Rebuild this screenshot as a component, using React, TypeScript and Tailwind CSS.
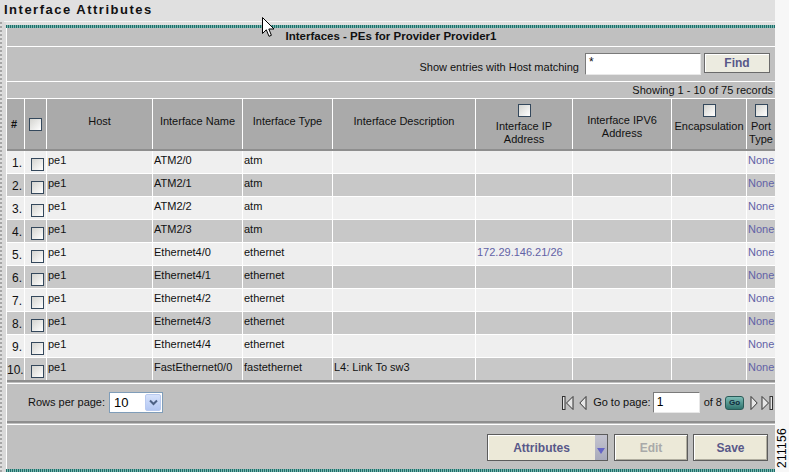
import React from "react";

const rows: [string, string, string, string][] = [
  ["ATM2/0", "atm", "", ""],
  ["ATM2/1", "atm", "", ""],
  ["ATM2/2", "atm", "", ""],
  ["ATM2/3", "atm", "", ""],
  ["Ethernet4/0", "ethernet", "", "172.29.146.21/26"],
  ["Ethernet4/1", "ethernet", "", ""],
  ["Ethernet4/2", "ethernet", "", ""],
  ["Ethernet4/3", "ethernet", "", ""],
  ["Ethernet4/4", "ethernet", "", ""],
  ["FastEthernet0/0", "fastethernet", "L4: Link To sw3", ""],
];

const cols = "grid grid-cols-[18px_22px_106px_90px_90px_143px_97px_99px_75px_28px]";

function Box({ cls = "" }: { cls?: string }) {
  return (
    <div
      className={`w-[13px] h-[13px] border border-[#34485c] bg-linear-to-br from-[#d4d4d0] to-white ${cls}`}
    />
  );
}

function Btn({
  children,
  w,
  disabled,
}: {
  children: React.ReactNode;
  w: string;
  disabled?: boolean;
}) {
  return (
    <div
      className={`${w} h-[27px] flex items-center justify-center bg-[#ece9d8] border border-[#5c5c5c] shadow-[inset_1px_1px_0_#ffffff,inset_-1px_-1px_0_#b0ad9f] text-[12px] font-bold ${
        disabled ? "text-[#a9a9a9]" : "text-[#585889]"
      }`}
    >
      {children}
    </div>
  );
}

export default function App() {
  return (
    <div className="w-[789px] h-[472px] overflow-hidden flex bg-[#f7f7f7] font-['Liberation_Sans',Arial,sans-serif] text-[11px] text-[#111] relative">
      {/* main area */}
      <div className="w-[775px] h-[472px] bg-[#e0e0e0] flex flex-col">
        <div className="h-[21px] pl-[4px] pt-[2px] leading-[16px] text-[13px] font-bold tracking-[1.5px] text-[#111]">
          Interface Attributes
        </div>
        <div className="h-px ml-[4px] bg-[#f5f5f5]" />
        <div className="flex flex-1">
          <div className="w-[2px] border-l-2 border-dotted border-[#a6a6a6]" />
          <div className="w-[4px] bg-[#d9d9d9]" />
          <div className="flex-1 flex flex-col pt-[3px]">
            {/* teal stripe */}
            <div className="h-[3px] bg-[repeating-linear-gradient(90deg,#1e6e69_0px,#1e6e69_1px,#7ab6b0_1px,#7ab6b0_2px)]" />
            <div className="flex-1 flex flex-col bg-[#c0c0c0] border-l border-white">
              {/* title bar */}
              <div className="h-[18px] flex items-center justify-center font-bold text-[11.5px]">
                Interfaces - PEs for Provider Provider1
              </div>
              <div className="h-px bg-white" />
              {/* filter */}
              <div className="h-[34px] flex items-start justify-end pt-[6px] pr-[5px]">
                <span className="mt-[6px] mr-[6px]">Show entries with Host matching</span>
                <div className="w-[116px] h-[22px] bg-white border border-[#7a7a7a] border-r-[#e8e8e8] border-b-[#e8e8e8] pl-[3px] pt-[1px] text-[12px] leading-[14px]">
                  *
                </div>
                <div className="w-[66px] h-[20px] ml-[3px] flex items-center justify-center bg-[#ecebe0] border border-[#6a6a6a] shadow-[inset_1px_1px_0_#ffffff] text-[12px] font-bold text-[#585889]">
                  Find
                </div>
              </div>
              <div className="h-px bg-white" />
              {/* showing */}
              <div className="h-[16px] flex items-center justify-end pr-[2px]">
                Showing 1 - 10 of 75 records
              </div>
              <div className="h-px bg-white" />
              {/* table header */}
              <div className={`${cols} h-[50px] bg-[#aaaaaa]`}>
                <div className="border-r border-white flex items-center pl-[4px] pt-[1px] font-bold">#</div>
                <div className="border-r border-white flex items-center justify-center pt-[1px]">
                  <Box />
                </div>
                <div className="border-r border-white flex items-center justify-center pb-[6px]">Host</div>
                <div className="border-r border-white flex items-center justify-center pb-[6px]">Interface Name</div>
                <div className="border-r border-white flex items-center justify-center pb-[6px]">Interface Type</div>
                <div className="border-r border-white flex items-center justify-center pb-[6px]">Interface Description</div>
                <div className="border-r border-white flex flex-col items-center pt-[5px] leading-[13px] text-center">
                  <Box cls="mb-[3px]" />
                  <span>Interface IP</span>
                  <span>Address</span>
                </div>
                <div className="border-r border-white flex flex-col items-center justify-center pt-[6px] leading-[13px] text-center">
                  <span>Interface IPV6</span>
                  <span>Address</span>
                </div>
                <div className="border-r border-white flex flex-col items-center pt-[5px] leading-[13px]">
                  <Box cls="mb-[3px]" />
                  <span>Encapsulation</span>
                </div>
                <div className="flex flex-col items-center pt-[5px] leading-[13px] text-center">
                  <Box cls="mb-[3px]" />
                  <span>Port</span>
                  <span>Type</span>
                </div>
              </div>
              <div className="h-[2px] bg-[#8e8e8e]" />
              {/* rows */}
              {rows.map((r, i) => (
                <div
                  key={i}
                  className={`${cols} h-[23px] border-b border-white leading-[13px] ${
                    i % 2 === 0 ? "bg-[#efefef]" : "bg-[#c8c8c8]"
                  }`}
                >
                  <div className="border-r border-white text-right pr-[2px] pt-[6px] text-[12px]">{i + 1}.</div>
                  <div className="border-r border-white pl-[6px] pt-[7px]">
                    <Box />
                  </div>
                  <div className="border-r border-white pl-[1px] pt-[3px]">pe1</div>
                  <div className="border-r border-white pl-[1px] pt-[3px]">{r[0]}</div>
                  <div className="border-r border-white pl-[1px] pt-[3px]">{r[1]}</div>
                  <div className="border-r border-white pl-[1px] pt-[3px]">{r[2]}</div>
                  <div className="border-r border-white pl-[1px] pt-[3px] text-[#6262a6]">{r[3]}</div>
                  <div className="border-r border-white" />
                  <div className="border-r border-white" />
                  <div className="pl-[1px] pt-[3px] text-[#6262a6]">None</div>
                </div>
              ))}
              <div className="h-[2px] bg-[#8e8e8e] -mt-px" />
              <div className="h-px" />
              <div className="h-px bg-white" />
              {/* paging */}
              <div className="h-[37px] flex items-center justify-between pl-[21px] pr-[2px]">
                <div className="flex items-center">
                  <span>Rows per page:</span>
                  <div className="ml-[4px] w-[54px] h-[21px] bg-white border border-[#7f9db9] flex items-stretch">
                    <span className="flex-1 pl-[4px] text-[13px] leading-[19px] text-black">10</span>
                    <div className="w-[16px] m-px rounded-[2px] bg-linear-to-b from-[#d6e2fb] to-[#b3c7f3] border border-[#b9caf0] flex items-center justify-center">
                      <svg width="9" height="7" viewBox="0 0 9 7">
                        <path d="M1 1.5 L4.5 5 L8 1.5" fill="none" stroke="#4d6185" strokeWidth="2" />
                      </svg>
                    </div>
                  </div>
                </div>
                <div className="flex items-center">
                  <svg width="12" height="16" viewBox="0 0 12 16" className="mr-[5px]">
                    <rect x="0.5" y="1.5" width="2.5" height="13" fill="#e6e6e6" stroke="#333" />
                    <path d="M11 1.5 L4.5 8 L11 14.5 Z" fill="#e6e6e6" stroke="#333" strokeLinejoin="round" />
                  </svg>
                  <svg width="8" height="16" viewBox="0 0 8 16" className="mr-[6px]">
                    <path d="M7 1.5 L0.8 8 L7 14.5 Z" fill="#e6e6e6" stroke="#333" strokeLinejoin="round" />
                  </svg>
                  <span>Go to page:</span>
                  <div className="ml-[2px] w-[47px] h-[21px] bg-white border border-[#7a7a7a] border-r-[#e8e8e8] border-b-[#e8e8e8] pl-[3px] text-[12px] leading-[18px] text-black">
                    1
                  </div>
                  <span className="ml-[4px]">of 8</span>
                  <div className="ml-[3px] w-[19px] h-[14px] rounded-[3px] bg-linear-to-b from-[#7dbdb6] to-[#2e736e] border border-[#2a5b58] flex items-center justify-center text-[8px] font-bold text-[#0e2a3c] leading-none">
                    Go
                  </div>
                  <svg width="8" height="16" viewBox="0 0 8 16" className="ml-[6px]">
                    <path d="M1 1.5 L7.2 8 L1 14.5 Z" fill="#e6e6e6" stroke="#333" strokeLinejoin="round" />
                  </svg>
                  <svg width="12" height="16" viewBox="0 0 12 16" className="ml-[3px]">
                    <path d="M1 1.5 L7.5 8 L1 14.5 Z" fill="#e6e6e6" stroke="#333" strokeLinejoin="round" />
                    <rect x="9" y="1.5" width="2.5" height="13" fill="#e6e6e6" stroke="#333" />
                  </svg>
                </div>
              </div>
              <div className="h-[2px] bg-[#8e8e8e]" />
              <div className="h-px" />
              <div className="h-px bg-white" />
              {/* buttons */}
              <div className="flex-1 flex items-center justify-end pr-[7px] pt-[1px]">
                <div className="w-[121px] h-[27px] flex bg-[#ece9d8] border border-[#5c5c5c] shadow-[inset_1px_1px_0_#ffffff]">
                  <div className="flex-1 flex items-center justify-center text-[12px] font-bold text-[#585889]">
                    Attributes
                  </div>
                  <div className="w-[12px] bg-linear-to-b from-[#c4c4d0] to-[#a8aabb] flex items-end justify-center pb-[6px]">
                    <svg width="8" height="6" viewBox="0 0 8 6">
                      <path d="M0 0 L8 0 L4 6 Z" fill="#6464c6" />
                    </svg>
                  </div>
                </div>
                <div className="ml-[6px]">
                  <Btn w="w-[74px]" disabled>
                    Edit
                  </Btn>
                </div>
                <div className="ml-[5px]">
                  <Btn w="w-[75px]">Save</Btn>
                </div>
              </div>
              <div className="h-[3px] -ml-px bg-[repeating-linear-gradient(90deg,#1e6e69_0px,#1e6e69_1px,#7ab6b0_1px,#7ab6b0_2px)]" />
            </div>
          </div>
        </div>
      </div>
      {/* right strip */}
      <div className="w-[14px] h-[472px] flex flex-col justify-end items-center pb-[4px]">
        <span className="[writing-mode:vertical-rl] rotate-180 text-[12px] leading-[13px] tracking-[0.3px] text-black">
          211156
        </span>
      </div>
      {/* mouse cursor */}
      <svg
        className="absolute left-[262px] top-[17px]"
        width="13"
        height="21"
        viewBox="0 0 13 21"
      >
        <path
          d="M0.5 0.5 L0.5 16.5 L4.3 12.8 L7 19.3 L9.4 18.3 L6.8 12 L12 12 Z"
          fill="#fff"
          stroke="#000"
          strokeLinejoin="round"
        />
      </svg>
    </div>
  );
}
